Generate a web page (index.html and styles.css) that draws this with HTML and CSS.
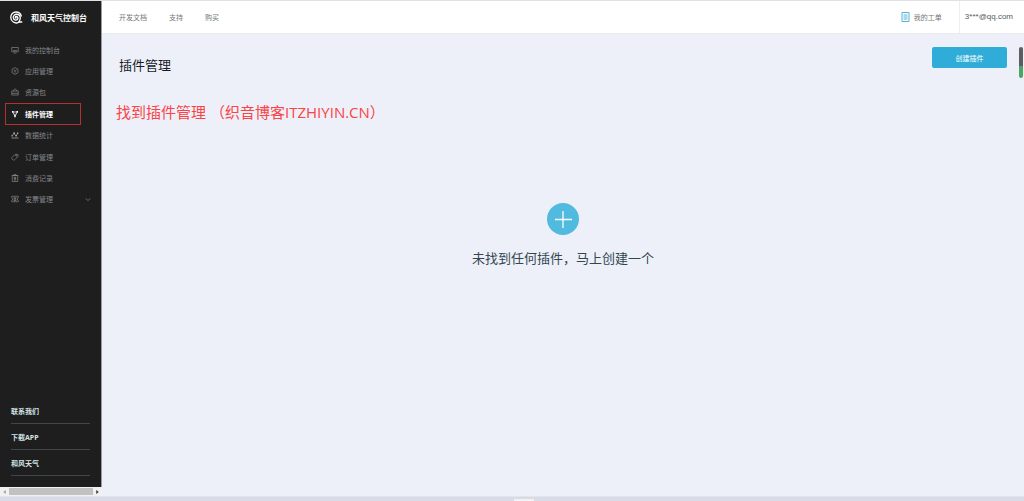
FILE: index.html
```html
<!DOCTYPE html>
<html lang="zh-CN">
<head>
<meta charset="utf-8">
<meta name="viewport" content="width=device-width, initial-scale=1">
<title>插件管理 - 和风天气控制台</title>
<link rel="stylesheet" href="styles.css">
</head>
<body>
<div class="app">
  <aside class="side">
    <div class="side-panel">
      <a class="brand" href="#">
        <svg class="brand-logo" viewBox="0 0 26 26" fill="none" stroke="currentColor" stroke-width="2.600" stroke-linecap="round"><path d="M13 14c-2 0-2-3 .5-3 3 0 4.500 3 2.500 5.500-2.500 3-8.500 1.500-8.500-3.500 0-4 3-6.500 6.500-6.500 4.500 0 7.500 3 7.500 7.500 0 3-1 5.500-3 8h6"/><path d="M18 23C11 26 2.500 21 2.500 13 2.500 6.500 7 2 13 2c5.500 0 9.500 3.500 10.500 8"/></svg>
        <span>和风天气控制台</span>
      </a>
      <nav class="menu">
        <a class="menu-item" href="#"><svg class="icon" viewBox="0 0 16 16"><path d="M1.500 3h13v8.500h-13zM5 14h6M4 9h8"/></svg>我的控制台</a>
        <a class="menu-item" href="#"><svg class="icon" viewBox="0 0 16 16"><path d="M8 1.200l5.800 3.300v7L8 14.800l-5.800-3.300v-7zM5 6l3 2 3-2M8 8v3.500"/></svg>应用管理</a>
        <a class="menu-item" href="#"><svg class="icon" viewBox="0 0 16 16"><path d="M1.500 6h13v8h-13zM4.500 6c0-5 7-5 7 0M1.500 10.500h13"/></svg>资源包</a>
        <a class="menu-item active" href="#"><svg class="icon" viewBox="0 0 16 16"><path d="M4 4h8M4 5l3.500 7M12 5L8.500 12M8 7v5"/><path class="solid" d="M2 2h3v3.500H2zM11 2h3v3.500h-3zM6.500 11h3v3.500h-3z"/></svg>插件管理</a>
        <a class="menu-item" href="#"><svg class="icon bright" viewBox="0 0 16 16"><path d="M1 14h14M2 9.500L6 5l4 4.500L13 5"/><path class="solid" d="M5 2.500h2.500V6H5zM9 8h2.500v3H9zM12 3h2.500v3H12zM1 8.500h2.500V11H1z"/></svg>数据统计</a>
        <a class="menu-item" href="#"><svg class="icon" viewBox="0 0 16 16"><path d="M2 9l6-6 5.500-.5L14 7l-6 6c-2 2-3.500 1-5 0s-2.500-2.500-1-4z"/><circle cx="10.500" cy="5.500" r="1"/></svg>订单管理</a>
        <a class="menu-item" href="#"><svg class="icon" viewBox="0 0 16 16"><path d="M2.500 3h11v12h-11zM1.500 3h13M5.500 1h5M5.500 6.500h5M5.500 9h5M8 6.500V12M5.500 12h5"/></svg>消费记录</a>
        <a class="menu-item" href="#"><svg class="icon" viewBox="0 0 16 16"><path d="M1.500 2.500h13v3l-1.500 1v3l1.500 1v3h-13v-3l1.500-1v-3l-1.500-1zM5 5.500h6M5 8h6M8 5.500V11M5 11h6"/></svg>发票管理<svg class="chevron" viewBox="0 0 8 6"><path d="M1 1.500l3 3 3-3"/></svg></a>
      </nav>
      <div class="side-links">
        <a href="#">联系我们</a>
        <a href="#">下载APP</a>
        <a href="#">和风天气</a>
      </div>
    </div>
    <div class="scroll-x">
      <svg class="arrow dim" viewBox="0 0 4 6"><path d="M4 0v6L0 3z"/></svg>
      <span class="scroll-x-thumb"></span>
      <svg class="arrow" viewBox="0 0 4 6"><path d="M0 0v6l4-3z"/></svg>
    </div>
  </aside>
  <div class="content">
    <header class="topbar">
      <nav class="topnav">
        <a href="#">开发文档</a>
        <a href="#">支持</a>
        <a href="#">购买</a>
      </nav>
      <a class="tickets" href="#"><svg class="ticket-icon" viewBox="0 0 9 10"><path d="M1 .5h7v9H1zM2.500 3h4M2.500 5h4M2.500 7h4"/></svg>我的工单</a>
      <a class="account" href="#">3***@qq.com</a>
    </header>
    <main class="page">
      <div class="page-head">
        <h1>插件管理</h1>
        <button class="create" type="button">创建插件</button>
      </div>
      <p class="note"><span>找到插件管理</span><span>（织音博客ITZHIYIN.CN）</span></p>
      <div class="empty">
        <button class="add" type="button" aria-label="创建插件"><svg viewBox="0 0 32 32"><path d="M16 8v17M8 16.500h17"/></svg></button>
        <p>未找到任何插件，马上创建一个</p>
      </div>
      <div class="scroll-y"></div>
    </main>
  </div>
</div>
<div class="bottom-bar"><span class="grip"></span></div>
</body>
</html>
```
FILE: styles.css
```css
* { box-sizing: border-box; }

body {
  margin: 0;
  min-height: 100vh;
  display: flex;
  flex-direction: column;
  border-top: 1px solid #dfe1e2;
  background: #edf0f9;
  font-family: "Open Sans", "Noto Sans CJK SC", sans-serif;
  font-size: 7px;
}

a { color: inherit; text-decoration: none; }
h1, p { margin: 0; font-weight: 400; }
svg { display: block; flex: none; }
button { border: 0; padding: 0; font: inherit; cursor: pointer; }

.app { flex: 1; display: flex; }

.side { flex: none; width: 102px; display: flex; flex-direction: column; }
.side-panel {
  flex: 1;
  display: flex;
  flex-direction: column;
  border-right: 1px solid #999b9f;
  background: #1e1e1e;
  color: #85878b;
}
.brand {
  height: 33px;
  display: flex;
  align-items: center;
  gap: 8px;
  padding-left: 9px;
  color: #fff;
  font-size: 8px;
  font-weight: 700;
  white-space: nowrap;
}
.brand-logo { width: 14px; height: 13px; }

.menu {
  height: 171px;
  margin: 5px 0 0 5px;
  display: flex;
  flex-direction: column;
}
.menu-item {
  flex: 1;
  width: 76px;
  display: flex;
  align-items: center;
  padding-left: 6px;
  gap: 6px;
  white-space: nowrap;
}
.menu-item:last-child { width: 86px; }
.menu-item.active {
  outline: 1px solid #b5302f;
  outline-offset: -1px;
  color: #fff;
  font-weight: 700;
}
.icon {
  width: 8px;
  height: 8px;
  fill: none;
  stroke: currentColor;
  stroke-width: 1.4;
}
.bright { color: #b5b6b8; }
.solid { fill: currentColor; stroke: none; }
.chevron {
  width: 6px;
  height: 5px;
  margin-left: auto;
  fill: none;
  stroke: currentColor;
}

.side-links {
  margin: auto 11px 11px;
  display: flex;
  flex-direction: column;
  color: #d5e3e6;
  font-weight: 700;
}
.side-links a { height: 26px; line-height: 27px; border-bottom: 1px solid #41464a; }

.scroll-x {
  height: 9px;
  display: flex;
  align-items: center;
  gap: 3px;
  padding: 0 3px;
  background: #f1f1f2;
}
.scroll-x-thumb { flex: 1; height: 7px; background: #c1c1c1; }
.arrow { width: 3px; height: 4px; fill: #404040; }
.dim { fill: #a3a3a3; }

.content { flex: 1; min-width: 0; display: flex; flex-direction: column; }
.topbar {
  height: 33px;
  display: flex;
  align-items: center;
  background: #fff;
  border-bottom: 1px solid #e9ebef;
  color: #73777b;
}
.topnav { flex: 1; display: flex; gap: 22px; padding-left: 17px; }
.tickets { display: flex; align-items: center; gap: 4px; padding-right: 17px; }
.ticket-icon { width: 9px; height: 10px; fill: none; stroke: #55b3d9; }
.account {
  align-self: stretch;
  padding: 0 11px 0 5px;
  border-left: 1px solid #eceef1;
  color: #55595e;
  font-family: "Liberation Sans", sans-serif;
  font-size: 8px;
  line-height: 31px;
}

.page { flex: 1; position: relative; padding: 13px 17px; }
.page-head { display: flex; justify-content: space-between; }
h1 { padding-top: 8px; color: #171a1f; font-size: 13px; line-height: 20px; }
.create {
  width: 75px;
  height: 21px;
  border-radius: 2px;
  background: #2fadd8;
  color: #fff;
}
.note {
  display: flex;
  gap: 4px;
  margin: 27px 0 0 -3px;
  color: #fb4345;
  font-size: 15px;
  line-height: 20px;
}
.empty {
  display: flex;
  flex-direction: column;
  align-items: center;
  gap: 13px;
  padding-top: 81px;
  color: #33464f;
  font-size: 13px;
  line-height: 20px;
}
.add { width: 32px; height: 32px; border-radius: 50%; background: #50badf; }
.add svg { stroke: #fff; stroke-width: 1.3; }

.scroll-y {
  position: absolute;
  top: 13px;
  right: 1px;
  width: 4px;
  height: 31px;
  border-radius: 2px;
  background: linear-gradient(#5b5d60 62%, #4ca564 62%);
}

.bottom-bar {
  height: 5px;
  display: flex;
  justify-content: center;
  align-items: flex-end;
  padding-left: 24px;
  border-top: 1px solid #e2e4ec;
  background: #d9dbe7;
}
.grip { width: 20px; height: 2px; background: #f2f2f6; }
```
